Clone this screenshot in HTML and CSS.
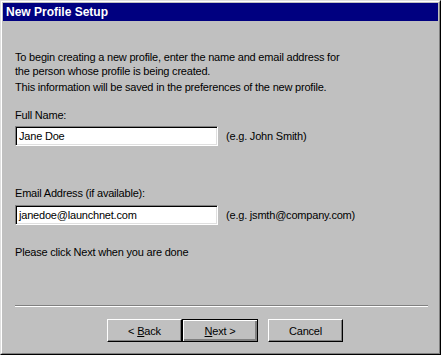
FILE: index.html
```html
<html>

<head>
	<title>New Profile Setup</title>
	<link rel="stylesheet" href="styles.css">
</head>

<body>
	<div class="window">
		<div class="frame">
			<div class="titlebar">New Profile Setup</div>

			<div class="content">
				<p class="intro">To begin creating a new profile, enter the name and email address for<br>the person whose profile is being created.</p>
				<p class="note">This information will be saved in the preferences of the new profile.</p>

				<p class="label">Full Name:</p>
				<div class="field-row">
					<div class="field">Jane Doe</div>
					<span class="hint">(e.g. John Smith)</span>
				</div>

				<p class="label email-label">Email Address (if available):</p>
				<div class="field-row email-row">
					<div class="field">janedoe@launchnet.com</div>
					<span class="hint">(e.g. jsmth@company.com)</span>
				</div>

				<p class="done">Please click Next when you are done</p>
			</div>

			<div class="separator"></div>

			<div class="buttons">
				<button class="btn">&lt; <u>B</u>ack</button>
				<button class="btn default"><u>N</u>ext &gt;</button>
				<button class="btn cancel">Cancel</button>
			</div>
		</div>
	</div>
</body>

</html>
```

FILE: styles.css
```css
* {
	box-sizing: border-box;
}

body {
	margin: 0;
	background: #c0c0c0;
	font-family: 'Liberation Sans', Arial, sans-serif;
	font-size: 11px;
	letter-spacing: -0.2px;
	color: #000;
}

.window {
	width: 441px;
	height: 355px;
	border-top: 1px solid #dfdfdf;
	border-left: 1px solid #dfdfdf;
	border-right: 1px solid #000;
	border-bottom: 1px solid #000;
}

.frame {
	height: 100%;
	padding: 1px;
	border-top: 1px solid #fff;
	border-left: 1px solid #fff;
	border-right: 1px solid #808080;
	border-bottom: 1px solid #808080;
}

.titlebar {
	background: #000080;
	color: #fff;
	font-weight: bold;
	font-size: 12px;
	letter-spacing: 0;
	height: 18px;
	line-height: 18px;
	padding-left: 3px;
}

.content {
	padding: 29px 0 0 12px;
}

p {
	margin: 0;
	line-height: 14px;
}

.note {
	margin-top: 2px;
}

.label {
	margin-top: 14px;
}

.email-label {
	margin-top: 40px;
}

.field-row {
	display: flex;
	align-items: center;
	margin-top: 4px;
}

.email-row {
	margin-top: 5px;
}

.field {
	width: 203px;
	height: 20px;
	background: #fff;
	border-top: 1px solid #808080;
	border-left: 1px solid #808080;
	border-right: 1px solid #fff;
	border-bottom: 1px solid #fff;
	box-shadow: inset 1px 1px 0 #000, inset -1px -1px 0 #dfdfdf;
	padding: 0 3px;
	line-height: 18px;
}

.hint {
	margin-left: 8px;
}

.done {
	margin-top: 20px;
}

.separator {
	margin: 46px 10px 0 12px;
	border-top: 1px solid #808080;
	border-bottom: 1px solid #fff;
}

.buttons {
	display: flex;
	margin: 12px 0 0 104px;
}

.btn {
	width: 75px;
	height: 23px;
	padding: 0;
	background: #c0c0c0;
	font-family: 'Liberation Sans', Arial, sans-serif;
	font-size: 11px;
	letter-spacing: -0.2px;
	color: #000;
	border-top: 1px solid #fff;
	border-left: 1px solid #fff;
	border-right: 1px solid #000;
	border-bottom: 1px solid #000;
	box-shadow: inset -1px -1px 0 #808080;
}

.btn.default {
	width: 76px;
	border: 1px solid #000;
	box-shadow: inset 1px 1px 0 #fff, inset -2px -2px 0 #808080, inset -1px -1px 0 #000;
}

.btn.cancel {
	margin-left: 10px;
}
```
